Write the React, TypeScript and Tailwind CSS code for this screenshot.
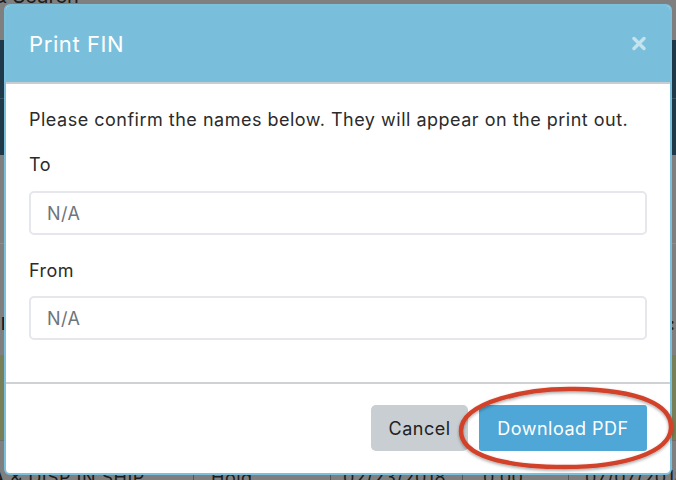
import React from "react";

const font = { fontFamily: "Inter, 'Open Sans', sans-serif" };

function PageBehind() {
  return (
    <div className="flex h-[480px] w-[676px] flex-col bg-[#7f7f7f] text-[#1c1c1c]" style={font}>
      <div className="h-[40px] overflow-hidden">
        <p className="-mt-[14px] -ml-[6px] text-[20px] leading-[20px]">&amp; Search</p>
      </div>
      <div className="flex h-[115px] flex-col bg-[#1f3949]">
        <div className="h-[58px]" />
        <div className="h-[1px] bg-[#3b5261]" />
      </div>
      <div className="flex h-[200px] flex-col justify-between">
        <div className="mt-[88px] h-[1px] bg-[#8c8c8c]" />
        <div className="mb-[22px] flex justify-between px-px text-[17px] font-bold leading-none">
          <span>I</span>
          <span>:</span>
        </div>
      </div>
      <div className="h-[85px] bg-[#767f57]" />
      <div className="h-[1px] bg-[#6e6e6e]" />
      <div className="flex h-[39px] items-end text-[18px] tracking-[0.5px] leading-none">
        <div className="flex w-full translate-y-[9px] items-center">
          <span className="w-[201px] shrink-0 -ml-[8px] pl-0">A &amp; DISP IN SHIP</span>
          <span className="h-[22px] w-px shrink-0 bg-[#555]" />
          <span className="w-[136px] shrink-0 pl-[17px]">Hold</span>
          <span className="h-[22px] w-px shrink-0 bg-[#555]" />
          <span className="w-[131px] shrink-0 pl-[12px]">02/23/2018</span>
          <span className="h-[22px] w-px shrink-0 bg-[#555]" />
          <span className="w-[105px] shrink-0 pl-[20px]">0.00</span>
          <span className="h-[22px] w-px shrink-0 bg-[#555]" />
          <span className="shrink-0 pl-[16px]">07/07/2018</span>
        </div>
      </div>
    </div>
  );
}

function Modal() {
  return (
    <div
      className="absolute left-[4px] top-[4px] flex h-[471px] w-[668px] flex-col overflow-hidden rounded-[6px] border-2 border-[#7cc0dc] bg-white"
      style={font}
    >
      <div className="flex h-[76px] shrink-0 items-center justify-between bg-[#79bfdb] pl-[23px] pr-[24px]">
        <h4 className="text-[22px] font-normal tracking-[0.6px] text-white">Print FIN</h4>
        <svg width="14" height="15" viewBox="0 0 14 15" className="mt-[-2px]">
          <path d="M2 2.5l10 10M12 2.5l-10 10" stroke="#c3e3ef" strokeWidth="3.4" strokeLinecap="round" />
        </svg>
      </div>
      <div className="h-[2px] shrink-0 bg-[#c7cdd1]" />
      <div className="flex flex-1 flex-col px-[23px] pt-[22px] text-[18px] tracking-[0.5px] text-[#2b2b2b]">
        <p className="leading-[28px]">Please confirm the names below. They will appear on the print out.</p>
        <label className="mt-[17px] leading-[28px]">To</label>
        <div className="mt-[12px] flex h-[44px] items-center rounded-[5px] border-2 border-[#e6e7ec] px-[16px] text-[#6f757b]">
          N/A
        </div>
        <label className="mt-[22px] leading-[28px]">From</label>
        <div className="mt-[11px] flex h-[44px] items-center rounded-[5px] border-2 border-[#e6e7ec] px-[16px] text-[#6f757b]">
          N/A
        </div>
      </div>
      <div className="h-[2px] shrink-0 bg-[#cfd2d5]" />
      <div className="flex h-[89px] shrink-0 items-start justify-end gap-[11px] pr-[23px] pt-[21px] text-[18px] tracking-[0.5px]">
        <button className="h-[46px] w-[97px] rounded-[5px] bg-[#c9ced2] text-[#222]">Cancel</button>
        <button className="h-[46px] w-[168px] rounded-[3px] bg-[#4ea7d6] text-white">Download PDF</button>
      </div>
    </div>
  );
}

export default function App() {
  return (
    <div className="relative h-[480px] w-[676px] overflow-hidden">
      <PageBehind />
      <Modal />
      <svg className="pointer-events-none absolute left-0 top-0" width="676" height="480">
        <defs>
          <filter id="sh" x="-10%" y="-20%" width="120%" height="140%">
            <feDropShadow dx="0" dy="1.5" stdDeviation="1.5" floodColor="#000" floodOpacity="0.35" />
          </filter>
        </defs>
        <path
          d="M461 431 C 461 401, 530 388, 575 389 C 640 390, 672 405, 671 428 C 670 452, 625 467, 565 467 C 505 467, 461 456, 461 431 Z"
          fill="none"
          stroke="#d2432a"
          strokeWidth="4.5"
          filter="url(#sh)"
        />
      </svg>
    </div>
  );
}
